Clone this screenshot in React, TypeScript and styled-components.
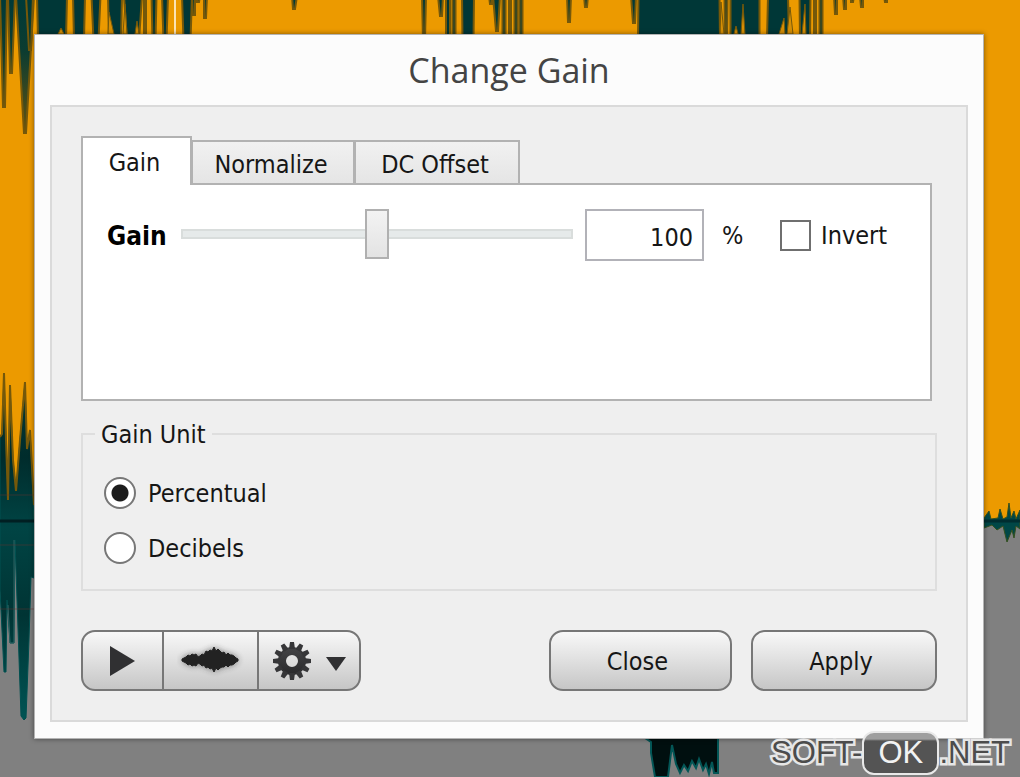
import React, { useState } from 'react';
import styled, { createGlobalStyle, css } from 'styled-components';

const GlobalStyle = createGlobalStyle`
  *, *::before, *::after { box-sizing: border-box; }
  body {
    margin: 0;
    background: #808080;
    font-family: "DejaVu Sans Condensed", "DejaVu Sans", Tahoma, sans-serif;
    font-size: 25px;
    line-height: 32px;
    color: #161616;
  }
  button, input { font: inherit; color: inherit; margin: 0; }
`;

const Page = styled.div`
  position: relative;
  display: flex;
  min-height: 100vh;
  padding: 34px 36px 38px 34px;
  overflow: hidden;
`;

const Backdrop = styled.svg`
  position: absolute;
  inset: 0;
  width: 100%;
  height: 100%;
`;

const Dialog = styled.section`
  position: relative;
  flex: 1;
  min-width: 0;
  display: flex;
  flex-direction: column;
  padding: 0 15px 16px;
  background: #fcfcfc;
  border: 1px solid #b4b4b4;
  box-shadow: 0 0 5px rgba(0, 0, 0, 0.45);
`;

const Title = styled.h1`
  margin: 0;
  height: 70px;
  font-family: "Open Sans", "Noto Sans", sans-serif;
  font-size: 34px;
  font-weight: 400;
  line-height: 70px;
  text-align: center;
  color: #444;
`;

const Frame = styled.div`
  flex: 1;
  padding: 29px;
  background: #efefef;
  border: 2px solid #dadada;
`;

const TabList = styled.div`
  position: relative;
  display: flex;
  align-items: flex-end;
  margin-bottom: -2px;
`;

const Tab = styled.button<{ $active: boolean; $width: number }>`
  width: ${p => p.$width}px;
  height: 43px;
  margin: 0 0 2px -1px;
  padding: 4px 4px 0 0;
  border: 2px solid #b2b2b2;
  border-bottom: 0;
  background: linear-gradient(#f1f1f1, #e5e5e5);
  line-height: 36px;
  ${p => p.$active && css`
    height: 49px;
    margin: 0;
    padding-top: 2px;
    background: #fff;
    z-index: 1;
  `}
`;

const Panel = styled.div`
  min-height: 218px;
  margin-right: 5px;
  padding: 24px 36px 24px 24px;
  background: #fff;
  border: 2px solid #b2b2b2;
`;

const GainRow = styled.div`
  display: flex;
  align-items: center;
`;

const GainLabel = styled.label`
  width: 74px;
  padding-top: 2px;
  font-size: 26px;
  font-weight: 700;
  color: #000;
`;

const Slider = styled.input`
  appearance: none;
  align-self: flex-start;
  flex: 1;
  min-width: 0;
  height: 50px;
  background: transparent;
  &::-webkit-slider-runnable-track {
    height: 10px;
    background: #e6eaea;
    border: 2px solid #d9dddc;
  }
  &::-webkit-slider-thumb {
    appearance: none;
    width: 24px;
    height: 50px;
    margin-top: -22px;
    background: linear-gradient(#f3f3f3, #e3e3e3);
    border: 2px solid #b0b0b0;
  }
`;

const ValueBox = styled.input`
  width: 119px;
  height: 52px;
  margin-left: 12px;
  padding: 5px 9px 0;
  border: 2px solid #b2b2b8;
  border-radius: 0;
  background: #fff;
  text-align: right;
`;

const Unit = styled.span`
  width: 76px;
  padding: 2px 0 0 18px;
`;

const Option = styled.label<{ $gap: number }>`
  display: flex;
  align-items: center;
  gap: ${p => p.$gap}px;
  height: 32px;
`;

const OptionText = styled.span`
  padding-top: 2px;
`;

const InvertOption = styled(Option)`
  width: 114px;
`;

const CheckBox = styled.input`
  appearance: none;
  flex: none;
  width: 31px;
  height: 31px;
  background: #fff;
  border: 2px solid #6f6f6f;
  &:checked { box-shadow: inset 0 0 0 5px #fff; background: #222; }
`;

const RadioButton = styled.input`
  appearance: none;
  flex: none;
  width: 32px;
  height: 32px;
  background: #fff;
  border: 2px solid #777;
  border-radius: 50%;
  &:checked { background: radial-gradient(circle, #1c1c1c 8px, #fff 9px); }
`;

const UnitGroup = styled.fieldset`
  margin: 16px 0 39px;
  padding: 26px 21px 25px;
  border: 2px solid #dedede;
`;

const Legend = styled.legend`
  margin-left: -9px;
  padding: 2px 6px 0;
`;

const Options = styled.div`
  display: flex;
  flex-direction: column;
  gap: 23px;
`;

const Footer = styled.div`
  display: flex;
  align-items: center;
`;

const buttonFace = css`
  height: 61px;
  border: 2px solid #777;
  background: linear-gradient(#f8f8f8, #e2e2e2 45%, #c6c6c6);
`;

const ToolGroup = styled.div`
  ${buttonFace}
  display: flex;
  margin-right: auto;
  border-radius: 14px;
  overflow: hidden;
`;

const ToolButton = styled.button<{ $width: number }>`
  display: flex;
  align-items: center;
  justify-content: center;
  width: ${p => p.$width}px;
  padding: 0;
  border: 0;
  background: transparent;
  & + & { border-left: 2px solid #777; }
`;

const PushButton = styled.button<{ $width: number }>`
  ${buttonFace}
  width: ${p => p.$width}px;
  margin-left: 19px;
  padding: 2px 6px 0 0;
  border-radius: 14px;
`;

const Watermark = styled.div`
  position: absolute;
  right: 10px;
  bottom: 2px;
  display: flex;
  align-items: center;
  font-family: "Liberation Sans", Arial, sans-serif;
  font-size: 31px;
  line-height: 44px;
  color: #4c4c4c;
`;

const Outlined = styled.span`
  -webkit-text-stroke: 5px #e6e6e6;
  paint-order: stroke fill;
`;

const Badge = styled.span`
  width: 77px;
  height: 44px;
  border: 2px solid #e9e9e9;
  border-radius: 12px;
  background: linear-gradient(#9f9f9f 6px, #545454 8px);
  color: #f2f2f2;
  line-height: 40px;
  text-align: center;
`;

// [left, right, tip x, tip y] of each notch hanging from the top edge
const notches: number[][] = [
  [0, 7, 4, 107], [8, 15, 11, 73], [16, 34, 25, 133], [26, 33, 30, 50],
  [204, 207, 205, 18], [192, 195, 194, 15], [197, 200, 198, 2], [292, 297, 294, 9],
  [438, 443, 441, 16], [493, 500, 497, 31], [489, 492, 491, 4],
  [567, 571, 569, 22], [584, 588, 586, 7], [631, 636, 634, 23],
  [834, 837, 836, 14], [843, 846, 845, 9], [851, 854, 852, 2],
  [860, 863, 862, 7], [884, 887, 886, 2],
];

// [x, width at the top, width at the dialog's edge] of the bars that run behind the dialog
const bars: number[][] = [
  [52, 30, 28], [79, 12, 10], [96, 9, 5], [115, 14, 12], [133, 18, 12], [145, 2, 2], [154, 5, 3],
  [165, 6, 3], [187, 10, 7], [424, 4, 2], [448, 4, 4], [454, 3, 3], [468, 12, 11],
  [504, 3, 3], [510, 2, 2], [516, 3, 3], [521, 3, 3], [679, 81, 82], [726, 3, 2], [745, 29, 29],
  [778, 20, 22], [805, 11, 10], [815, 2, 2], [821, 3, 3],
];

// [base x, peak x, peak y, half width, base y] of the orange gaps inside the bars
const gaps: number[][] = [
  [61, 61, 28, 3, 34], [111, 109, 12, 3, 34], [125, 125, 4, 2, 34], [137, 137, 21, 2, 34],
  [722, 721, 2, 2, 34], [736, 736, 26, 2, 34], [743, 743, 4, 2, 34], [782, 784, 18, 3, 34],
  [790, 790, 7, 3, 34], [804, 805, 4, 2, 34],
];

function Waveform() {
  return (
    <Backdrop viewBox="0 0 1020 777" preserveAspectRatio="none" aria-hidden="true">
      <defs>
        <linearGradient id="teal" x1="0" y1="370" x2="0" y2="720" gradientUnits="userSpaceOnUse">
          <stop offset="0" stopColor="#043c36" />
          <stop offset="0.25" stopColor="#002c2c" />
          <stop offset="0.45" stopColor="#004444" />
          <stop offset="0.7" stopColor="#003434" />
          <stop offset="1" stopColor="#005454" />
        </linearGradient>
        <linearGradient id="notch" x1="0" y1="0" x2="0" y2="130" gradientUnits="userSpaceOnUse">
          <stop offset="0" stopColor="#003a38" />
          <stop offset="0.4" stopColor="#0c3c30" />
          <stop offset="1" stopColor="#5f5212" />
        </linearGradient>
      </defs>
      <rect width="1020" height="777" fill="#808080" />
      <rect width="1020" height="521" fill="#ec9a00" />
      <g fill="#003737" stroke="#75580a" strokeWidth="2">
        {bars.map(([x, a, b]) => (
          <path key={x} d={`M${x - a / 2} -4H${x + a / 2}L${x + b / 2} 40H${x - b / 2}Z`} />
        ))}
        {notches.map(([l, r, x, y]) => (
          <path key={l + '-' + y} d={`M${l} -4L${x - 1} ${y}H${x + 1}L${r} -4Z`} fill="url(#notch)" />
        ))}
      </g>
      <g fill="#d68e04" stroke="#75580a" strokeWidth="1">
        {gaps.map(([b, x, y, h, e]) => (
          <path key={b} d={`M${b - h} ${e}L${x} ${y}L${b + h} ${e}Z`} />
        ))}
      </g>
      <rect x="174" width="2" height="36" fill="#fbe3b4" />
      <path
        d="M0 437L2 434L4 373L6 440L8 500L10 385L13 460L16 491L20 440L25 382L27 449L30 430L34 520V578L31 577L29 640L26 718L24 720L21 716L17 600L15 540L14 643H10L7 600L6 672H4L0 590Z"
        fill="url(#teal)"
        stroke="#005050"
        strokeWidth="1"
      />
      <path d="M0 437L2 434L4 373L6 440L8 500L10 385L13 460L16 491L20 440L25 382L27 449L30 430L34 505" fill="none" stroke="#75580a" strokeWidth="2" />
      <path d="M14 540L14 643H10L8 605" fill="none" stroke="#2f6161" />
      <path d="M0 521H34" stroke="#001f22" strokeWidth="3" />
      <path d="M0 495H34M0 545H34M0 609H34" stroke="#6b342d" strokeOpacity="0.45" strokeWidth="1" />
      <path
        d="M984 518L989 511L991 519L998 518L1000 509L1003 519L1007 517L1009 503L1011 518L1014 511L1016 519L1020 510V529L1016 526L1014 538L1012 530L1007 542L1003 526L997 530L992 525L984 528Z"
        fill="#004747"
        stroke="#33501f"
        strokeWidth="1"
      />
      <path d="M984 521H1020" stroke="#002d30" strokeWidth="3" />
      <path
        d="M642 736H718V773H714L712 762L709 774L706 764L703 770L699 759L696 768L692 761L688 771L684 765L680 773L676 764L672 745L668 777H655L651 753V742Z"
        fill="#000f0f"
        stroke="#035656"
        strokeWidth="2"
      />
    </Backdrop>
  );
}

function PlayIcon() {
  return (
    <svg width="26" height="30" viewBox="0 0 26 30" aria-hidden="true">
      <path d="M0 0L25 15L0 30Z" fill="#303032" />
    </svg>
  );
}

const waveHeights = [1, 2, 3, 5, 4, 6, 5, 6, 3, 4, 6, 5, 9, 8, 10, 9, 13, 9, 11, 9, 7, 8, 5, 7, 5, 5, 4, 2, 1];

function WaveIcon() {
  const top = waveHeights.map((h, i) => `${5 + i * 2} ${18 - h}`);
  const bottom = waveHeights.map((h, i) => `${5 + i * 2} ${18 + h - (h > 7 ? 1 : 0)}`).reverse();
  return (
    <svg width="68" height="38" viewBox="0 0 68 38" aria-hidden="true">
      <defs>
        <filter id="glow" x="-20%" y="-40%" width="140%" height="180%">
          <feGaussianBlur stdDeviation="3" />
        </filter>
      </defs>
      <path d={`M${top.join('L')}L${bottom.join('L')}Z`} fill="#333" opacity="0.7" filter="url(#glow)" />
      <path d={`M${top.join('L')}L${bottom.join('L')}Z`} fill="#222" stroke="#222" strokeWidth="1" />
    </svg>
  );
}

function GearIcon() {
  return (
    <svg width="86" height="40" viewBox="0 0 86 40" aria-hidden="true">
      <defs>
        <linearGradient id="metal" x1="0" y1="0" x2="0" y2="40" gradientUnits="userSpaceOnUse">
          <stop offset="0" stopColor="#4b4b4d" />
          <stop offset="1" stopColor="#232325" />
        </linearGradient>
      </defs>
      <circle cx="26" cy="20" r="10" fill="none" stroke="url(#metal)" strokeWidth="8" />
      <g fill="#363638">
        {Array.from({ length: 12 }, (_, i) => (
          <path key={i} d="M23 8L24 1H28L29 8Z" transform={`rotate(${i * 30} 26 20)`} />
        ))}
      </g>
      <path d="M60 16H80L70 30Z" fill="#303032" />
    </svg>
  );
}

const tabs = [
  { name: 'Gain', width: 111 },
  { name: 'Normalize', width: 164 },
  { name: 'DC Offset', width: 166 },
];

export default function App() {
  const [tab, setTab] = useState('Gain');
  const [gain, setGain] = useState('100');
  const [unit, setUnit] = useState('Percentual');

  return (
    <>
      <GlobalStyle />
      <Page>
        <Waveform />
        <Dialog role="dialog" aria-labelledby="dialog-title">
          <Title id="dialog-title">Change Gain</Title>
          <Frame>
            <TabList role="tablist">
              {tabs.map(t => (
                <Tab
                  key={t.name}
                  type="button"
                  role="tab"
                  aria-selected={tab === t.name}
                  $active={tab === t.name}
                  $width={t.width}
                  onClick={() => setTab(t.name)}
                >
                  {t.name}
                </Tab>
              ))}
            </TabList>
            <Panel role="tabpanel">
              <GainRow>
                <GainLabel htmlFor="gain">Gain</GainLabel>
                <Slider id="gain" type="range" min="0" max="200" value={gain} onChange={e => setGain(e.target.value)} />
                <ValueBox type="text" aria-label="Gain value" value={gain} onChange={e => setGain(e.target.value)} />
                <Unit>%</Unit>
                <InvertOption $gap={10}>
                  <CheckBox type="checkbox" />
                  <OptionText>Invert</OptionText>
                </InvertOption>
              </GainRow>
            </Panel>
            <UnitGroup>
              <Legend>Gain Unit</Legend>
              <Options>
                {['Percentual', 'Decibels'].map(name => (
                  <Option key={name} $gap={12}>
                    <RadioButton type="radio" name="unit" checked={unit === name} onChange={() => setUnit(name)} />
                    <OptionText>{name}</OptionText>
                  </Option>
                ))}
              </Options>
            </UnitGroup>
            <Footer>
              <ToolGroup>
                <ToolButton type="button" aria-label="Play" $width={79}><PlayIcon /></ToolButton>
                <ToolButton type="button" aria-label="Preview waveform" $width={95}><WaveIcon /></ToolButton>
                <ToolButton type="button" aria-label="Settings" $width={102}><GearIcon /></ToolButton>
              </ToolGroup>
              <PushButton type="button" $width={183}>Close</PushButton>
              <PushButton type="button" $width={186}>Apply</PushButton>
            </Footer>
          </Frame>
        </Dialog>
        <Watermark>
          <Outlined>SOFT-</Outlined>
          <Badge>OK</Badge>
          <Outlined>.NET</Outlined>
        </Watermark>
      </Page>
    </>
  );
}
